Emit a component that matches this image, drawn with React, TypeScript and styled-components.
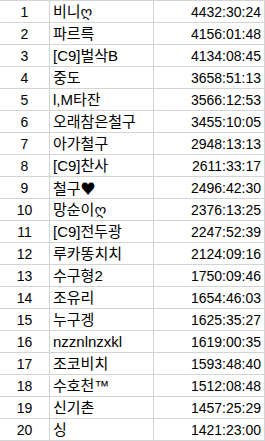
import React from 'react';
import styled, { createGlobalStyle } from 'styled-components';

const GlobalStyle = createGlobalStyle`
    html, body {
        margin: 0;
        padding: 0;
        background: #fff;
    }
`

const Sheet = styled.div`
    display: grid;
    grid-template-columns: 50px 104px 111px;
    width: 265px;
    border-top: 1px solid #d4d4d4;
    font-family: "Liberation Sans", "Noto Sans CJK KR", "DejaVu Sans", sans-serif;
    font-size: 14px;
    color: #000;
`

const Cell = styled.div<{ $align: 'left' | 'center' | 'right' }>`
    height: 21px;
    line-height: 22px;
    border-right: 1px solid #d4d4d4;
    border-bottom: 1px solid #d4d4d4;
    white-space: nowrap;
    overflow: hidden;
    text-align: ${({ $align }) => $align};
    padding: ${({ $align }) => ($align === 'left' ? '0 0 0 3px' : $align === 'right' ? '0 3px 0 0' : '0')};
    font-size: ${({ $align }) => ($align === 'left' ? '15px' : '14px')};
`

const Symbol = styled.span`
    font-family: "Noto Sans CJK KR", sans-serif;
    font-size: 15px;
`

const rows: [React.ReactNode, string][] = [
    ['비니ღ', '4432:30:24'],
    ['파르륵', '4156:01:48'],
    ['[C9]벌삭B', '4134:08:45'],
    ['중도', '3658:51:13'],
    ['l,M타잔', '3566:12:53'],
    ['오래참은철구', '3455:10:05'],
    ['아가철구', '2948:13:13'],
    ['[C9]찬사', '2611:33:17'],
    [<>철구<Symbol>♥</Symbol></>, '2496:42:30'],
    ['망순이ღ', '2376:13:25'],
    ['[C9]전두광', '2247:52:39'],
    ['루카똥치치', '2124:09:16'],
    ['수구형2', '1750:09:46'],
    ['조유리', '1654:46:03'],
    ['누구겡', '1625:35:27'],
    ['nzznlnzxkl', '1619:00:35'],
    ['조코비치', '1593:48:40'],
    ['수호천™', '1512:08:48'],
    ['신기촌', '1457:25:29'],
    ['싱', '1421:23:00'],
]

function App() {
    return (
        <>
            <GlobalStyle />
            <Sheet>
                {rows.map(([name, time], i) => (
                    <React.Fragment key={i}>
                        <Cell $align="center">{i + 1}</Cell>
                        <Cell $align="left">{name}</Cell>
                        <Cell $align="right">{time}</Cell>
                    </React.Fragment>
                ))}
            </Sheet>
        </>
    )
}

export default App
